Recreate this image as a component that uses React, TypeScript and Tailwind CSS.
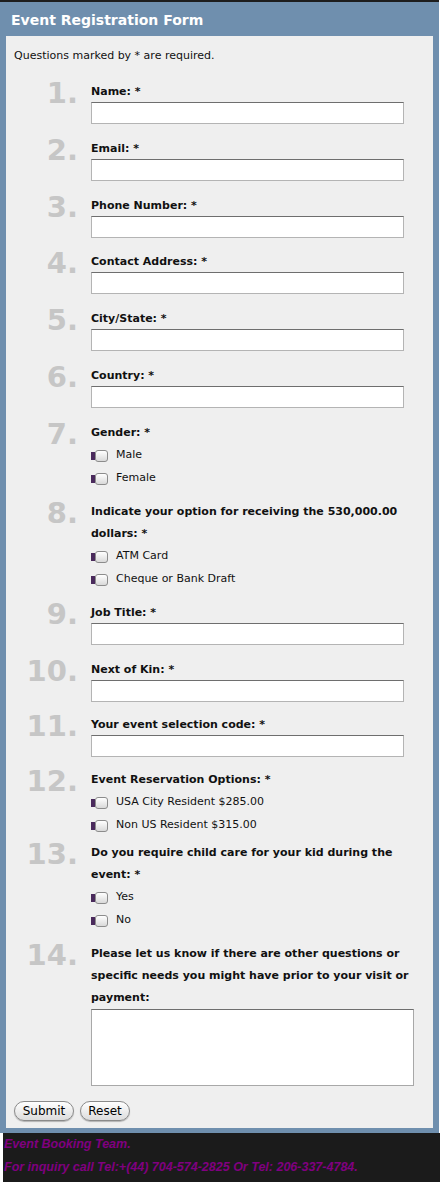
const font = { fontFamily: '"DejaVu Sans", Verdana, sans-serif' };

type Q =
  | { n: number; label: string[]; kind: "text"; mb: string }
  | { n: number; label: string[]; kind: "check"; options: string[]; mb: string }
  | { n: number; label: string[]; kind: "area"; mb: string };

const questions: Q[] = [
  { n: 1, label: ["Name: *"], kind: "text", mb: "mb-[13px]" },
  { n: 2, label: ["Email: *"], kind: "text", mb: "mb-[13px]" },
  { n: 3, label: ["Phone Number: *"], kind: "text", mb: "mb-[12px]" },
  { n: 4, label: ["Contact Address: *"], kind: "text", mb: "mb-[13px]" },
  { n: 5, label: ["City/State: *"], kind: "text", mb: "mb-[13px]" },
  { n: 6, label: ["Country: *"], kind: "text", mb: "mb-[13px]" },
  { n: 7, label: ["Gender: *"], kind: "check", options: ["Male", "Female"], mb: "mb-[10px]" },
  {
    n: 8,
    label: ["Indicate your option for receiving the 530,000.00", "dollars: *"],
    kind: "check",
    options: ["ATM Card", "Cheque or Bank Draft"],
    mb: "mb-[10px]",
  },
  { n: 9, label: ["Job Title: *"], kind: "text", mb: "mb-[13px]" },
  { n: 10, label: ["Next of Kin: *"], kind: "text", mb: "mb-[11px]" },
  { n: 11, label: ["Your event selection code: *"], kind: "text", mb: "mb-[11px]" },
  {
    n: 12,
    label: ["Event Reservation Options: *"],
    kind: "check",
    options: ["USA City Resident $285.00", "Non US Resident $315.00"],
    mb: "mb-[4px]",
  },
  {
    n: 13,
    label: ["Do you require child care for your kid during the", "event: *"],
    kind: "check",
    options: ["Yes", "No"],
    mb: "mb-[10px]",
  },
  {
    n: 14,
    label: [
      "Please let us know if there are other questions or",
      "specific needs you might have prior to your visit or",
      "payment:",
    ],
    kind: "area",
    mb: "mb-[14px]",
  },
];

function Check({ text }: { text: string }) {
  return (
    <label className="flex h-[23px] items-center">
      <span className="mt-[1px] h-[8px] w-[4px] bg-[#4a2a5c]" />
      <span className="h-[12px] w-[13px] rounded-[3px] border border-[#8c8c8c] bg-gradient-to-b from-white to-[#d9d9d9]" />
      <span className="ml-[8px] text-[11px] text-[#111]">{text}</span>
    </label>
  );
}

function Question({ q }: { q: Q }) {
  return (
    <div className={`flex ${q.mb}`}>
      <div
        className="w-[72px] shrink-0 text-right text-[29px] font-bold leading-none text-[#c6c6c6] mt-[-1px]"
        style={font}
      >
        {q.n}.
      </div>
      <div className="ml-[13px] flex-1">
        <div className="text-[11px] font-bold leading-[22px] text-[#111] pt-[1px] mb-[-1px]">
          {q.label.map((l) => (
            <div key={l}>{l}</div>
          ))}
        </div>
        {q.kind === "text" && (
          <div className="h-[22px] w-[313px] border border-[#b4b4b4] border-t-[#6e6e6e] bg-white" />
        )}
        {q.kind === "area" && (
          <div className="mt-[1px] h-[77px] w-[323px] border border-[#a8a8a8] border-t-[#6e6e6e] bg-white" />
        )}
        {q.kind === "check" && (
          <div className="mt-[1px]">
            {q.options.map((o) => (
              <Check key={o} text={o} />
            ))}
          </div>
        )}
      </div>
    </div>
  );
}

function Btn({ text, w }: { text: string; w: string }) {
  return (
    <button
      className={`${w} h-[20px] rounded-full border border-[#8a8a8a] bg-gradient-to-b from-white to-[#dcdcdc] text-[12px] leading-none text-black shadow-[0_1px_1px_rgba(0,0,0,0.25)]`}
      style={{ fontFamily: '"DejaVu Sans", sans-serif' }}
    >
      {text}
    </button>
  );
}

export default function App() {
  return (
    <div className="min-h-[1185px] w-[443px] bg-white" style={font}>
      <div className="w-[439px] border-t-2 border-[#1d1d1d] bg-[#6f8fae] px-[6px] pb-[5px]">
        <h1 className="flex h-[34px] items-center pl-[5px] pt-[2px] text-[14px] font-bold text-white">
          Event Registration Form
        </h1>
        <div className="bg-[#efefef] pt-[10px] pb-[7px]">
          <p className="pl-[8px] text-[11px] leading-[20px] text-[#111]">
            Questions marked by * are required.
          </p>
          <div className="mt-[14px]">
            {questions.map((q) => (
              <Question key={q.n} q={q} />
            ))}
          </div>
          <div className="flex gap-[6px] pl-[8px] pt-[1px]">
            <Btn text="Submit" w="w-[60px]" />
            <Btn text="Reset" w="w-[50px]" />
          </div>
        </div>
      </div>
      <div
        className="ml-[3px] w-[437px] bg-[#1b1b1b] pb-[3px] pl-[1px] text-[12.5px] font-bold italic leading-[23px] text-[#800080]"
        style={{ fontFamily: '"Liberation Sans", Arial, sans-serif' }}
      >
        <div>Event Booking Team.</div>
        <div>For inquiry call Tel:+(44) 704-574-2825 Or Tel: 206-337-4784.</div>
      </div>
    </div>
  );
}
